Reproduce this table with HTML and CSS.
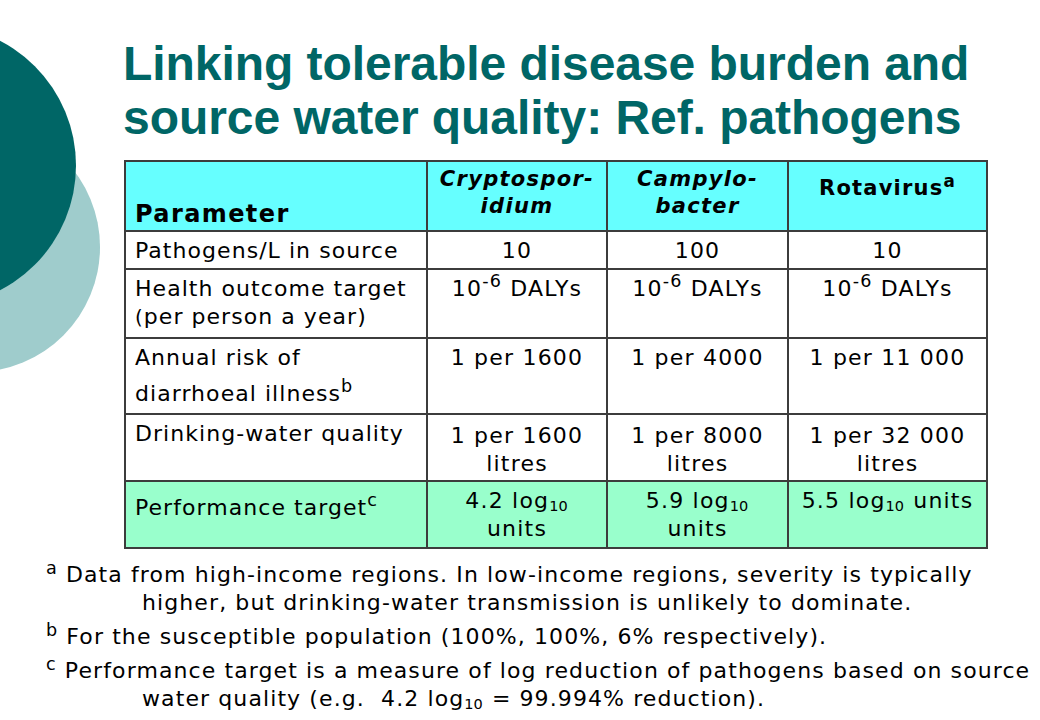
FILE: index.html
```html
<!DOCTYPE html>
<html>
<head>
<meta charset="utf-8">
<link rel="stylesheet" href="styles.css">
</head>
<body>
<div class="slide">
  <div class="circle circle-light"></div>
  <div class="circle circle-dark"></div>
  <h1 class="title">Linking tolerable disease burden and<br>source water quality: Ref. pathogens</h1>
  <table class="grid">
    <colgroup>
      <col class="c1"><col class="c2"><col class="c3"><col class="c4">
    </colgroup>
    <tr class="head">
      <th class="param">Parameter</th>
      <th class="org">Cryptospor-<br>idium</th>
      <th class="org">Campylo-<br>bacter</th>
      <th class="rota">Rotavirus<sup>a</sup></th>
    </tr>
    <tr class="r1">
      <td class="label">Pathogens/L in source</td>
      <td>10</td><td>100</td><td>10</td>
    </tr>
    <tr class="r2">
      <td class="label">Health outcome target<br><span class="small">(</span>per person a year)</td>
      <td>10<sup>-6</sup> DALYs</td><td>10<sup>-6</sup> DALYs</td><td>10<sup>-6</sup> DALYs</td>
    </tr>
    <tr class="r3">
      <td class="label tall">Annual risk of<br>diarrhoeal illness<sup>b</sup></td>
      <td>1 per 1600</td><td>1 per 4000</td><td>1 per 11 000</td>
    </tr>
    <tr class="r4">
      <td class="label">Drinking-water quality</td>
      <td class="pushed">1 per 1600<br>litres</td><td class="pushed">1 per 8000<br>litres</td><td class="pushed">1 per 32 000<br>litres</td>
    </tr>
    <tr class="r5">
      <td class="label perf">Performance target<sup>c</sup></td>
      <td class="pushed-lo">4.2 log<sub>10</sub><br>units</td><td class="pushed-lo">5.9 log<sub>10</sub><br>units</td><td>5.5 log<sub>10</sub> units</td>
    </tr>
  </table>
  <div class="notes">
    <p><sup>a</sup> Data from high-income regions. In low-income regions, severity is typically higher, but drinking-water transmission is unlikely to dominate.</p>
    <p><sup>b</sup> For the susceptible population (100%, 100%, 6% respectively).</p>
    <p><sup>c</sup> Performance target is a measure of log reduction of pathogens based on source water quality (e.g.&nbsp; 4.2 log<sub>10</sub> = 99.994% reduction).</p>
  </div>
</div>
</body>
</html>
```

FILE: styles.css
```css
html, body {
  margin: 0;
  padding: 0;
  background: #ffffff;
}

.slide {
  position: relative;
  width: 1040px;
  height: 720px;
  overflow: hidden;
  background: #ffffff;
  display: flex;
  flex-direction: column;
}

.circle {
  position: absolute;
  border-radius: 50%;
}

.circle-light {
  left: -150px;
  top: 122px;
  width: 250px;
  height: 250px;
  background: #9fcccc;
}

.circle-dark {
  left: -205px;
  top: 25px;
  width: 281px;
  height: 281px;
  background: #006666;
}

.title {
  position: relative;
  margin: 37px 0 0 123px;
  font-family: "Liberation Sans", Arial, sans-serif;
  font-weight: bold;
  font-size: 48px;
  line-height: 54px;
  color: #006666;
  letter-spacing: -0.05px;
}

.grid {
  position: relative;
  margin: 15px 0 0 124px;
  width: 862px;
  border-collapse: collapse;
  table-layout: fixed;
  font-family: "DejaVu Sans", Verdana, sans-serif;
  font-size: 22px;
  letter-spacing: 1.2px;
  color: #000000;
}

.c1 { width: 302px; }
.c2 { width: 180px; }
.c3 { width: 181px; }
.c4 { width: 199px; }

.grid th,
.grid td {
  border: 2px solid #3c3c3c;
  padding: 5px 2px 0 2px;
  vertical-align: top;
  text-align: center;
  line-height: 28px;
  white-space: nowrap;
}

.grid td.label {
  text-align: left;
  padding-left: 9px;
  letter-spacing: 1.05px;
}

.head th {
  background: #66ffff;
  height: 70px;
  box-sizing: border-box;
  font-weight: bold;
}

.head th.param {
  text-align: left;
  vertical-align: bottom;
  padding-left: 9px;
  padding-bottom: 2px;
  font-size: 24px;
  letter-spacing: 1.4px;
}

.head th.org {
  font-style: italic;
  font-size: 21px;
  letter-spacing: 1.3px;
  line-height: 27px;
  padding-top: 4px;
}

.head th.rota {
  font-size: 21px;
  letter-spacing: 1.2px;
  padding-top: 12px;
}

.r1 td { height: 38px; box-sizing: border-box; }
.r2 td { height: 69px; box-sizing: border-box; }
.r3 td { height: 76px; box-sizing: border-box; }
.r4 td { height: 67px; box-sizing: border-box; }
.r5 td { height: 67px; box-sizing: border-box; background: #99ffcc; }

.small {
  font-size: 0.9em;
}

.grid td.tall {
  line-height: 36px;
  padding-top: 1px;
}

.grid td.pushed {
  padding-top: 7px;
}

.grid td.pushed-lo {
  padding-top: 5px;
}

.grid td.perf {
  padding-top: 12px;
}

.grid sup {
  font-size: 0.8em;
  line-height: 0;
  vertical-align: 0.5em;
}

.grid sub {
  font-size: 0.66em;
  line-height: 1;
  letter-spacing: 0;
  margin-right: 1px;
  vertical-align: -3px;
}

.notes {
  position: relative;
  margin: 12px 0 0 46px;
  font-family: "DejaVu Sans", Verdana, sans-serif;
  font-size: 22px;
  letter-spacing: 1.1px;
  line-height: 28px;
  color: #000000;
}

.notes p {
  margin: 0 0 6px 0;
  padding-left: 96px;
  text-indent: -96px;
}

.notes sup {
  font-size: 0.8em;
  line-height: 0;
  vertical-align: 0.45em;
}

.notes sub {
  font-size: 0.66em;
  line-height: 1;
  letter-spacing: 0;
  margin-right: 1px;
  vertical-align: -3px;
}
```
